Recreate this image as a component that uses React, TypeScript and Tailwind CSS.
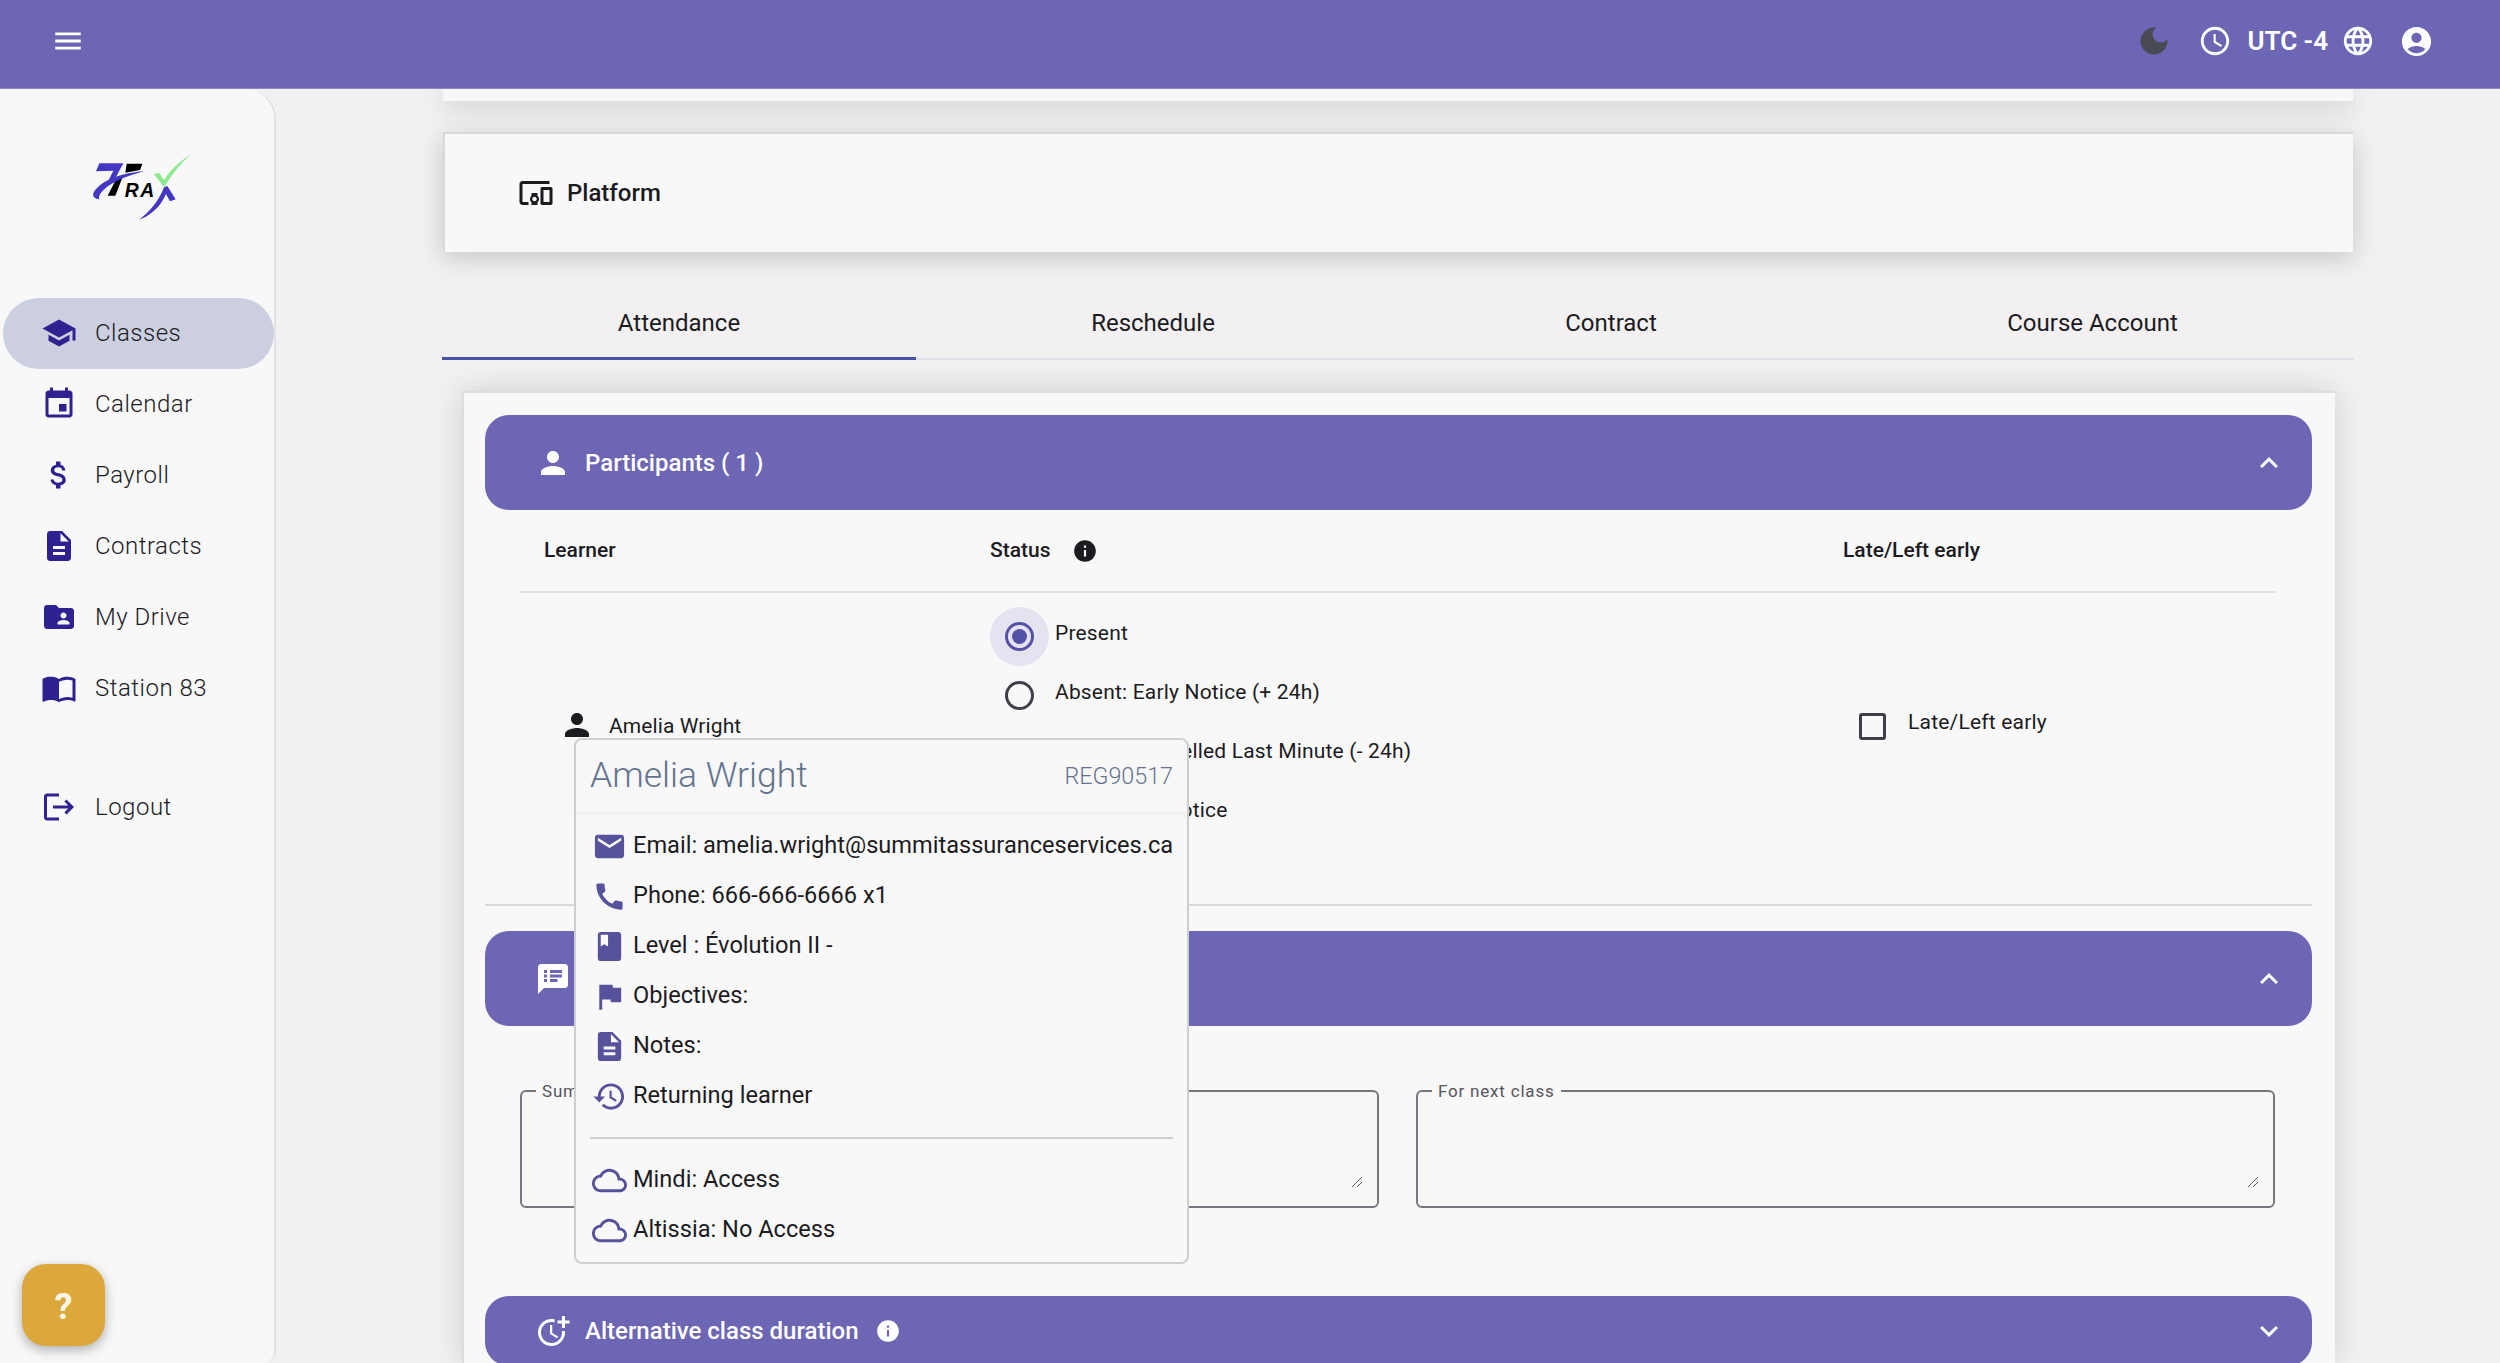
const P = {
  school: "M5 13.18v4L12 21l7-3.82v-4L12 17l-7-3.82zM12 3 1 9l11 6 9-4.91V17h2V9L12 3z",
  event: "M17 12h-5v5h5v-5zM16 1v2H8V1H6v2H5c-1.11 0-1.99.9-1.99 2L3 19c0 1.1.89 2 2 2h14c1.1 0 2-.9 2-2V5c0-1.1-.9-2-2-2h-1V1h-2zm3 18H5V8h14v11z",
  money: "M11.8 10.9c-2.27-.59-3-1.2-3-2.15 0-1.09 1.01-1.85 2.7-1.85 1.78 0 2.44.85 2.5 2.1h2.21c-.07-1.72-1.12-3.3-3.21-3.81V3h-3v2.16c-1.94.42-3.5 1.68-3.5 3.61 0 2.31 1.91 3.46 4.7 4.13 2.5.6 3 1.48 3 2.41 0 .69-.49 1.79-2.7 1.79-2.06 0-2.87-.92-2.98-2.1h-2.2c.12 2.19 1.76 3.42 3.68 3.83V21h3v-2.15c1.95-.37 3.5-1.5 3.5-3.55 0-2.84-2.43-3.81-4.7-4.4z",
  desc: "M14 2H6c-1.1 0-1.99.9-1.99 2L4 20c0 1.1.89 2 1.99 2H18c1.1 0 2-.9 2-2V8l-6-6zm2 16H8v-2h8v2zm0-4H8v-2h8v2zm-3-5V3.5L18.5 9H13z",
  folder: "M20 6h-8l-2-2H4c-1.1 0-1.99.9-1.99 2L2 18c0 1.1.9 2 2 2h16c1.1 0 2-.9 2-2V8c0-1.1-.9-2-2-2zm-5 3c1.1 0 2 .9 2 2s-.9 2-2 2-2-.9-2-2 .9-2 2-2zm4 8h-8v-1c0-1.33 2.67-2 4-2s4 .67 4 2v1z",
  book: "M21 5c-1.11-.35-2.33-.5-3.5-.5-1.95 0-4.05.4-5.5 1.5-1.45-1.1-3.55-1.5-5.5-1.5S2.45 4.9 1 6v14.65c0 .25.25.5.5.5.1 0 .15-.05.25-.05C3.1 20.45 5.05 20 6.5 20c1.95 0 4.05.4 5.5 1.5 1.35-.85 3.8-1.5 5.5-1.5 1.65 0 3.35.3 4.75 1.05.1.05.15.05.25.05.25 0 .5-.25.5-.5V6c-.6-.45-1.25-.75-2-1zm0 13.5c-1.1-.35-2.3-.5-3.5-.5-1.7 0-4.15.65-5.5 1.5V8c1.35-.85 3.8-1.5 5.5-1.5 1.2 0 2.4.15 3.5.5v11.5z",
  logout: "M17 7l-1.41 1.41L18.17 11H8v2h10.17l-2.58 2.58L17 17l5-5zM4 5h8V3H4c-1.1 0-2 .9-2 2v14c0 1.1.9 2 2 2h8v-2H4V5z",
  menu: "M3 18h18v-2H3v2zm0-5h18v-2H3v2zm0-7v2h18V6H3z",
  moon: "M12 3c-4.97 0-9 4.03-9 9s4.03 9 9 9 9-4.03 9-9c0-.46-.04-.92-.1-1.36-.98 1.37-2.58 2.26-4.4 2.26-2.98 0-5.4-2.42-5.4-5.4 0-1.81.89-3.42 2.26-4.4-.44-.06-.9-.1-1.36-.1z",
  clock: "M11.99 2C6.47 2 2 6.48 2 12s4.47 10 9.99 10C17.52 22 22 17.52 22 12S17.52 2 11.99 2zM12 20c-4.42 0-8-3.58-8-8s3.58-8 8-8 8 3.58 8 8-3.58 8-8 8zm.5-13H11v6l5.25 3.15.75-1.23-4.5-2.67z",
  globe: "M11.99 2C6.47 2 2 6.48 2 12s4.47 10 9.99 10C17.52 22 22 17.52 22 12S17.52 2 11.99 2zm6.93 6h-2.95c-.32-1.25-.78-2.45-1.38-3.56 1.84.63 3.37 1.91 4.33 3.56zM12 4.04c.83 1.2 1.48 2.53 1.91 3.96h-3.82c.43-1.43 1.08-2.76 1.91-3.96zM4.26 14C4.1 13.36 4 12.69 4 12s.1-1.36.26-2h3.38c-.08.66-.14 1.32-.14 2 0 .68.06 1.34.14 2H4.26zm.82 2h2.95c.32 1.25.78 2.45 1.38 3.56-1.84-.63-3.37-1.9-4.33-3.56zm2.95-8H5.08c.96-1.66 2.49-2.93 4.33-3.56C8.81 5.55 8.35 6.75 8.03 8zM12 19.96c-.83-1.2-1.48-2.53-1.91-3.96h3.82c-.43 1.43-1.08 2.76-1.91 3.96zM14.34 14H9.66c-.09-.66-.16-1.32-.16-2 0-.68.07-1.35.16-2h4.68c.09.65.16 1.32.16 2 0 .68-.07 1.34-.16 2zm.25 5.56c.6-1.11 1.06-2.31 1.38-3.56h2.95c-.96 1.65-2.49 2.93-4.33 3.56zM16.36 14c.08-.66.14-1.32.14-2 0-.68-.06-1.34-.14-2h3.38c.16.64.26 1.31.26 2s-.1 1.36-.26 2h-3.38z",
  account: "M12 2C6.48 2 2 6.48 2 12s4.48 10 10 10 10-4.48 10-10S17.52 2 12 2zm0 4c1.93 0 3.5 1.57 3.5 3.5S13.93 13 12 13s-3.5-1.57-3.5-3.5S10.07 6 12 6zm0 14c-2.03 0-4.43-.82-6.14-2.88C7.55 15.8 9.68 15 12 15s4.45.8 6.14 2.12C16.43 19.18 14.03 20 12 20z",
  devices: "M3 6h18V4H3c-1.1 0-2 .9-2 2v12c0 1.1.9 2 2 2h4v-2H3V6zm10 6H9v1.78c-.61.55-1 1.33-1 2.22s.39 1.67 1 2.22V20h4v-1.78c.61-.55 1-1.34 1-2.22s-.39-1.67-1-2.22V12zm-2 5.5c-.83 0-1.5-.67-1.5-1.5s.67-1.5 1.5-1.5 1.5.67 1.5 1.5-.67 1.5-1.5 1.5zM22 8h-6c-.5 0-1 .5-1 1v10c0 .5.5 1 1 1h6c.5 0 1-.5 1-1V9c0-.5-.5-1-1-1zm-1 10h-4v-8h4v8z",
  person: "M12 12c2.21 0 4-1.79 4-4s-1.79-4-4-4-4 1.79-4 4 1.79 4 4 4zm0 2c-2.67 0-8 1.34-8 4v2h16v-2c0-2.66-5.33-4-8-4z",
  info: "M12 2C6.48 2 2 6.48 2 12s4.48 10 10 10 10-4.48 10-10S17.52 2 12 2zm1 15h-2v-6h2v6zm0-8h-2V7h2v2z",
  up: "M12 8l-6 6 1.41 1.41L12 10.83l4.59 4.58L18 14z",
  down: "M16.59 8.59 12 13.17 7.41 8.59 6 10l6 6 6-6z",
  notes: "M20 2H4c-1.1 0-1.99.9-1.99 2L2 22l4-4h14c1.1 0 2-.9 2-2V4c0-1.1-.9-2-2-2zM8 14H6v-2h2v2zm0-3H6V9h2v2zm0-3H6V6h2v2zm7 6h-5v-2h5v2zm3-3h-8V9h8v2zm0-3h-8V6h8v2z",
  email: "M20 4H4c-1.1 0-1.99.9-1.99 2L2 18c0 1.1.9 2 2 2h16c1.1 0 2-.9 2-2V6c0-1.1-.9-2-2-2zm0 4l-8 5-8-5V6l8 5 8-5v2z",
  call: "M20.01 15.38c-1.23 0-2.42-.2-3.53-.56-.35-.12-.74-.03-1.01.24l-1.57 1.97c-2.83-1.35-5.48-3.9-6.89-6.83l1.95-1.66c.27-.28.35-.67.24-1.02-.37-1.11-.56-2.3-.56-3.53 0-.54-.45-.99-.99-.99H4.19C3.65 3 3 3.24 3 3.99 3 13.28 10.73 21 20.01 21c.71 0 .99-.63.99-1.18v-3.45c0-.54-.45-.99-.99-.99z",
  bookmark: "M18 2H6c-1.1 0-2 .9-2 2v16c0 1.1.9 2 2 2h12c1.1 0 2-.9 2-2V4c0-1.1-.9-2-2-2zM6 4h5v8l-2.5-1.5L6 12V4z",
  flag: "M14.4 6 14 4H5v17h2v-7h5.6l.4 2h7V6z",
  history: "M13 3c-4.97 0-9 4.03-9 9H1l3.89 3.89.07.14L9 12H6c0-3.87 3.13-7 7-7s7 3.13 7 7-3.13 7-7 7c-1.93 0-3.68-.79-4.94-2.06l-1.42 1.42C8.27 19.99 10.51 21 13 21c4.97 0 9-4.03 9-9s-4.03-9-9-9zm-1 5v5l4.28 2.54.72-1.21-3.5-2.08V8H12z",
  cloud: "M19.35 10.04C18.67 6.59 15.64 4 12 4 9.11 4 6.6 5.64 5.35 8.04 2.34 8.36 0 10.91 0 14c0 3.31 2.69 6 6 6h13c2.76 0 5-2.24 5-5 0-2.64-2.05-4.78-4.65-4.96zM19 18H6c-2.21 0-4-1.79-4-4s1.79-4 4-4h.71C7.37 7.69 9.48 6 12 6c3.04 0 5.5 2.46 5.5 5.5v.5H19c1.66 0 3 1.34 3 3s-1.34 3-3 3z",
  moreTime: "M10 8v6l4.7 2.9.8-1.2-4-2.4V8zM17.92 12c.05.33.08.66.08 1 0 3.9-3.1 7-7 7s-7-3.1-7-7 3.1-7 7-7c.7 0 1.37.1 2 .29V4.23C12.36 4.08 11.69 4 11 4c-5 0-9 4-9 9s4 9 9 9 9-4 9-9c0-.34-.02-.67-.06-1h-2.02zM20 5V2h-2v3h-3v2h3v3h2V7h3V5z",
};

function Icon({ d, className }: { d: string; className: string }) {
  return (
    <svg viewBox="0 0 24 24" fill="currentColor" className={className} aria-hidden="true">
      <path d={d} />
    </svg>
  );
}

function Logo() {
  return (
    <svg viewBox="0 0 510 330" className="w-[170px] h-[110px]">
      <path d="M118 100 L190 100 L162 152 L145 152 L160 122 L108 124 Z" fill="#4337c4" />
      <path d="M200 101 L247 101 L240 120 L196 128 Z" fill="#000" />
      <path d="M172 140 L190 136 L166 197 L143 197 Z" fill="#000" />
      <path d="M252 124 C190 128 120 150 100 190 C97 200 105 207 118 208 C112 195 135 155 252 124 Z" fill="#4337c4" />
      <text x="194" y="200" fontFamily="'Liberation Sans', sans-serif" fontWeight="700" fontStyle="italic" fontSize="58" letterSpacing="5" fill="#000">RA</text>
      <path d="M312 172 L322 168 L347 208 L330 214 L318 192 C300 235 265 260 237 269 C270 245 295 215 312 172 Z" fill="#4337c4" />
      <path d="M282 132 L297 128 L312 150 C335 115 365 90 392 75 C360 100 335 135 312 172 Z" fill="#8fe88f" />
    </svg>
  );
}

const nav = [
  { icon: P.school, label: "Classes", active: true },
  { icon: P.event, label: "Calendar" },
  { icon: P.money, label: "Payroll" },
  { icon: P.desc, label: "Contracts" },
  { icon: P.folder, label: "My Drive" },
  { icon: P.book, label: "Station 83" },
];

function NavItem({ icon, label, active }: { icon: string; label: string; active?: boolean }) {
  return (
    <div className={`flex items-center h-[71px] pb-[2px] w-[271px] ml-[3px] rounded-full ${active ? "bg-[#cbcfdf]" : ""}`}>
      <span className="w-[92px] pl-[38px] shrink-0 flex">
        <Icon d={icon} className="w-[36px] h-[36px] text-[#2e2290]" />
      </span>
      <span className="text-[24px] font-light tracking-[0.5px] text-[#1c1b1f]">{label}</span>
    </div>
  );
}

function Sidebar() {
  return (
    <aside className="relative w-[276px] shrink-0 bg-[#f8f8f8] border-r-2 border-[#e2e2e2] rounded-tr-[30px] rounded-br-[12px]">
      <div className="flex justify-start pl-[60px] pt-[41px] h-[209px]">
        <Logo />
      </div>
      <nav>
        {nav.map((n) => (
          <NavItem key={n.label} icon={n.icon} label={n.label} active={n.active} />
        ))}
        <div className="h-[48px]" />
        <NavItem icon={P.logout} label="Logout" />
      </nav>
      <button className="absolute left-[22px] bottom-[17px] w-[83px] h-[82px] pt-[3px] rounded-[24px] bg-[#dca83c] text-[#fdf6e6] text-[36px] font-bold flex items-center justify-center shadow-[0_4px_12px_rgba(0,0,0,0.3)]">
        ?
      </button>
    </aside>
  );
}

function TopBar() {
  return (
    <header className="h-[89px] shrink-0 bg-[#6c66b4] border-b border-[#8d89c6] flex items-center pb-[6px] pl-[51px] pr-[66px] z-10 relative">
      <Icon d={P.menu} className="w-[34px] h-[34px] text-white" />
      <div className="ml-auto flex items-center text-white">
        <Icon d={P.moon} className="w-[36px] h-[36px] text-[#4a4a55]" />
        <Icon d={P.clock} className="w-[34px] h-[34px] ml-[26px]" />
        <span className="ml-[15px] text-[26px] font-semibold">UTC -4</span>
        <Icon d={P.globe} className="w-[34px] h-[34px] ml-[13px]" />
        <Icon d={P.account} className="w-[35px] h-[35px] ml-[24px]" />
      </div>
    </header>
  );
}

function Accordion({ icon, title, open, info, className }: { icon: string; title?: string; open?: boolean; info?: boolean; className: string }) {
  return (
    <div className={`${className} shrink-0 rounded-[24px] bg-[#6c66b4] flex items-center pl-[50px] pr-[25px] text-white`}>
      <Icon d={icon} className="w-[36px] h-[36px]" />
      {title && <span className="ml-[14px] text-[24px] font-medium">{title}</span>}
      {info && <Icon d={P.info} className="w-[26px] h-[26px] ml-[16px]" />}
      <Icon d={open ? P.up : P.down} className="w-[36px] h-[36px] ml-auto" />
    </div>
  );
}

function Radio({ label, checked }: { label: string; checked?: boolean }) {
  return (
    <div className="flex h-[59px] items-start">
      <span className={`relative w-[59px] h-[59px] shrink-0 flex items-center justify-center rounded-full ${checked ? "bg-[#e4e3ef]" : ""}`}>
        <span className={`w-[29px] h-[29px] rounded-full border-[3px] flex items-center justify-center ${checked ? "border-[#5352a6]" : "border-[#3f3f4a]"}`}>
          {checked && <span className="w-[15px] h-[15px] rounded-full bg-[#5352a6]" />}
        </span>
      </span>
      <span className="ml-[6px] mt-[11px] text-[21px] leading-[30px] tracking-[0.18px] text-[#1c1b1f] whitespace-nowrap">{label}</span>
    </div>
  );
}

function PopRow({ icon, text }: { icon: string; text: string }) {
  return (
    <div className="flex items-center h-[50px] pl-[15px]">
      <span className="w-[36px] flex justify-center shrink-0">
        <Icon d={icon} className="w-[35px] h-[35px] text-[#57529c]" />
      </span>
      <span className="ml-[6px] text-[23.6px] text-[#1c1b1f] whitespace-nowrap">{text}</span>
    </div>
  );
}

function Popover() {
  return (
    <div className="absolute left-[110px] top-[345px] w-[615px] h-[526px] bg-[#f8f8f8] border-2 border-[#cfcfcf] rounded-[8px] z-20">
      <div className="h-[72px] flex items-center justify-between px-[14px] shadow-[0_2px_3px_rgba(0,0,0,0.05)]">
        <span className="text-[35.5px] font-light text-[#64748f]">Amelia Wright</span>
        <span className="text-[23.3px] font-light text-[#64748f]">REG90517</span>
      </div>
      <div className="pt-[9px]">
        <PopRow icon={P.email} text="Email: amelia.wright@summitassuranceservices.ca" />
        <PopRow icon={P.call} text="Phone: 666-666-6666 x1" />
        <PopRow icon={P.bookmark} text="Level : Évolution II -" />
        <PopRow icon={P.flag} text="Objectives:" />
        <PopRow icon={P.desc} text="Notes:" />
        <PopRow icon={P.history} text="Returning learner" />
      </div>
      <div className="mx-[14px] mt-[16px] mb-[16px] h-[2px] bg-[#cfcfcf]" />
      <PopRow icon={P.cloud} text="Mindi: Access" />
      <PopRow icon={P.cloud} text="Altissia: No Access" />
    </div>
  );
}

function TextArea({ label, className }: { label: string; className: string }) {
  return (
    <fieldset className={`relative h-[125px] border-2 border-[#77777f] rounded-[6px] pl-[14px] ${className}`}>
      <legend className="px-[6px] text-[17px] leading-[16px] tracking-[0.8px] text-[#55555c]">{label}</legend>
      <svg viewBox="0 0 12 12" className="absolute right-[14px] bottom-[18px] w-[12px] h-[12px] text-[#55555c]" fill="none" stroke="currentColor" strokeWidth="1">
        <path d="M1 11 L11 1 M6 11 L11 6" />
      </svg>
    </fieldset>
  );
}

function Attendance() {
  return (
    <div className="relative flex-1 min-h-0 w-[1873px] ml-[19px] mt-[31px] pt-[22px] pl-[21px] pr-[23px] flex flex-col bg-[#f8f8f8] border-t-2 border-l-2 border-[#dddddd] shadow-[0_0_30px_rgba(0,0,0,0.14)]">
      <Accordion icon={P.person} title="Participants ( 1 )" open className="h-[95px]" />
      <div className="mx-[35px] h-[83px] shrink-0 border-b-2 border-[#e2e2e2] flex items-center text-[21px] font-medium text-[#1c1b1f]">
        <span className="w-[470px] pl-[24px]">Learner</span>
        <span className="w-[853px] flex items-center">
          Status
          <Icon d={P.info} className="w-[26px] h-[26px] ml-[21px] text-[#1c1b1f]" />
        </span>
        <span>Late/Left early</span>
      </div>
      <div className="h-[313px] mb-[25px] shrink-0 flex border-b-2 border-[#d9d9d9]">
        <div className="w-[505px] pl-[74px] pt-[114px] flex items-start">
          <Icon d={P.person} className="w-[36px] h-[36px] text-[#1c1b1f]" />
          <span className="ml-[14px] mt-[7px] text-[21px] leading-[24px] tracking-[0.1px] text-[#1c1b1f]">Amelia Wright</span>
        </div>
        <div className="w-[855px] pt-[14px]">
          <Radio label="Present" checked />
          <Radio label="Absent: Early Notice (+ 24h)" />
          <Radio label="Absent: Cancelled Last Minute (- 24h)" />
          <Radio label="Absent: No Notice" />
        </div>
        <div className="pl-[14px] pt-[114px] flex items-start">
          <span className="w-[27px] h-[27px] mt-[6px] rounded-[3px] border-[3px] border-[#3f3f4a]" />
          <span className="ml-[22px] text-[21px] leading-[30px] tracking-[0.2px] text-[#1c1b1f]">Late/Left early</span>
        </div>
      </div>
      <Accordion icon={P.notes} open className="h-[95px]" />
      <div className="h-[270px] shrink-0 flex gap-[37px] px-[35px] pt-[57px]">
        <TextArea label="Summary" className="w-[859px]" />
        <TextArea label="For next class" className="w-[859px]" />
      </div>
      <Accordion icon={P.moreTime} title="Alternative class duration" info className="h-[70px]" />
      <Popover />
    </div>
  );
}

function Tabs() {
  const tabs = [
    { t: "Attendance", w: "w-[474px]", a: true },
    { t: "Reschedule", w: "w-[474px]" },
    { t: "Contract", w: "w-[442px]" },
    { t: "Course Account", w: "w-[521px]" },
  ];
  return (
    <div className="flex h-[72px] mt-[36px] ml-[-1px] shrink-0 border-b-2 border-[#e2e0e8]">
      {tabs.map((x) => (
        <div
          key={x.t}
          className={`${x.w} flex items-center justify-center text-[24px] text-[#1c1b1f] ${x.a ? "border-b-[3px] border-[#4a52a8] mb-[-2px]" : ""}`}
        >
          {x.t}
        </div>
      ))}
    </div>
  );
}

export default function App() {
  return (
    <div className="h-screen w-full overflow-hidden flex flex-col bg-[#f2f0f1] font-['Roboto',sans-serif]">
      <TopBar />
      <div className="flex flex-1 min-h-0">
        <Sidebar />
        <main className="flex-1 min-w-0 pl-[167px] flex flex-col">
          <div className="w-[1910px] h-[12px] shrink-0 bg-[#f8f8f8] shadow-[0_6px_24px_rgba(0,0,0,0.18)]" />
          <div className="w-[1910px] h-[120px] mt-[31px] shrink-0 bg-[#f8f8f8] border-t-2 border-l-2 border-[#d9d9d9] shadow-[0_6px_24px_rgba(0,0,0,0.18)] flex items-center pl-[73px]">
            <Icon d={P.devices} className="w-[36px] h-[36px] text-[#1c1b1f]" />
            <span className="ml-[13px] text-[24px] font-medium text-[#1c1b1f]">Platform</span>
          </div>
          <div className="w-[1911px] flex-1 min-h-0 flex flex-col">
            <Tabs />
            <Attendance />
          </div>
        </main>
      </div>
    </div>
  );
}
